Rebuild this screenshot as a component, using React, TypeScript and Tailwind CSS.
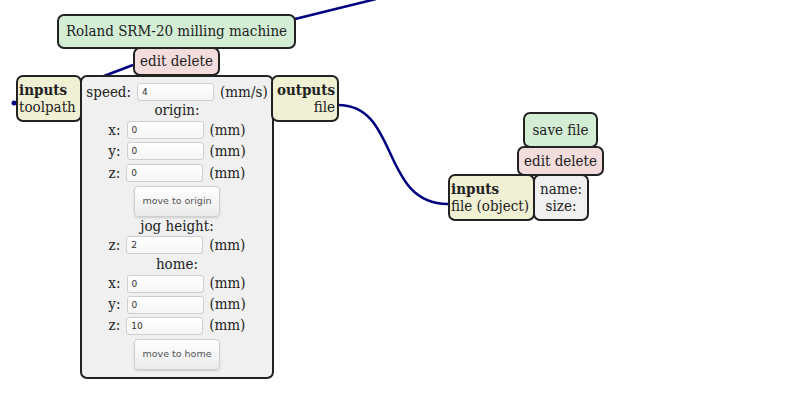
import React from "react";

const serif = { fontFamily: '"DejaVu Serif", serif', fontStretch: "condensed" } as React.CSSProperties;

function Field({ value }: { value: string }) {
  return (
    <div className="w-[77px] h-[18px] border border-[#cfcfcf] rounded-[3px] bg-gradient-to-b from-white to-[#f5f5f5] text-[9px] leading-[16px] pl-[4px] text-[#333] font-['DejaVu_Sans',sans-serif] [font-stretch:normal]">
      {value}
    </div>
  );
}

function Row({ label, value, unit, h }: { label: string; value: string; unit: string; h: string }) {
  return (
    <div className={`flex items-center ${h}`}>
      <span className="pr-[6px]">{label}</span>
      <Field value={value} />
      <span className="pl-[6px]">{unit}</span>
    </div>
  );
}

function Btn({ children, m }: { children: React.ReactNode; m: string }) {
  return (
    <div className={`w-[86px] h-[31px] ${m} flex items-center justify-center rounded-[4px] border border-[#d0d0d0] bg-gradient-to-b from-white to-[#ebebeb] shadow-[0_1px_2px_rgba(0,0,0,0.15)] text-[9.5px] text-[#555] font-['DejaVu_Sans',sans-serif] [font-stretch:normal]`}>
      {children}
    </div>
  );
}

export default function App() {
  return (
    <div className="relative w-[800px] h-[395px] bg-white overflow-hidden text-[15px] text-[#222]" style={serif}>
      <svg className="absolute inset-0" width="800" height="395">
        <path d="M295 19 L376 -1" stroke="#000080" strokeWidth="2.5" fill="none" />
        <path d="M133 65 L104 76" stroke="#000080" strokeWidth="2.5" fill="none" />
        <path d="M338 105 C 400 105, 380 204, 448 204" stroke="#000080" strokeWidth="2.5" fill="none" />
        <circle cx="14" cy="103" r="2.5" fill="#000080" />
      </svg>

      {/* title */}
      <div className="absolute left-[57px] top-[14px] w-[239px] h-[35px] rounded-[7px] border-2 border-[#222] bg-[#d4eed6] flex items-center justify-center">
        Roland SRM-20 milling machine
      </div>
      {/* edit delete */}
      <div className="absolute left-[133px] top-[47px] w-[87px] h-[29px] rounded-[7px] border-2 border-[#222] bg-[#f2dcdc] flex items-center justify-center">
        edit delete
      </div>
      {/* inputs */}
      <div className="absolute left-[16px] top-[75px] w-[66px] h-[47px] rounded-[7px] border-2 border-[#222] bg-[#f0f0d4] px-[1px] leading-[17px] pt-[5px]">
        <div className="font-bold">inputs</div>
        <div>toolpath</div>
      </div>
      {/* panel */}
      <div className="absolute left-[80px] top-[75px] w-[194px] h-[304px] rounded-[7px] border-2 border-[#222] bg-[#f0f0f0] flex flex-col items-center pt-[5px]">
        <div className="flex items-center h-[20px]">
          <span className="pr-[6px]">speed:</span>
          <Field value="4" />
          <span className="pl-[6px]">(mm/s)</span>
        </div>
        <div className="h-[17px] leading-[17px]">origin:</div>
        <Row label="x:" value="0" unit="(mm)" h="h-[21.5px]" />
        <Row label="y:" value="0" unit="(mm)" h="h-[21.5px]" />
        <Row label="z:" value="0" unit="(mm)" h="h-[21.5px]" />
        <Btn m="mt-[2px] mb-[1px]">move to origin</Btn>
        <div className="h-[16.5px] leading-[16.5px]">jog height:</div>
        <Row label="z:" value="2" unit="(mm)" h="h-[21.5px]" />
        <div className="h-[17.5px] leading-[17.5px]">home:</div>
        <Row label="x:" value="0" unit="(mm)" h="h-[21px]" />
        <Row label="y:" value="0" unit="(mm)" h="h-[21px]" />
        <Row label="z:" value="10" unit="(mm)" h="h-[21px]" />
        <Btn m="mt-[3px]">move to home</Btn>
      </div>
      {/* outputs */}
      <div className="absolute left-[271px] top-[75px] w-[68px] h-[47px] rounded-[7px] border-2 border-[#222] bg-[#f0f0d4] px-[2px] leading-[17px] pt-[5px] text-right">
        <div className="font-bold">outputs</div>
        <div>file</div>
      </div>

      {/* save file */}
      <div className="absolute left-[523px] top-[112px] w-[75px] h-[36px] rounded-[7px] border-2 border-[#222] bg-[#d4eed6] flex items-center justify-center">
        save file
      </div>
      <div className="absolute left-[517px] top-[146px] w-[87px] h-[30px] rounded-[7px] border-2 border-[#222] bg-[#f2dcdc] flex items-center justify-center">
        edit delete
      </div>
      <div className="absolute left-[448px] top-[174px] w-[87px] h-[47px] rounded-[7px] border-2 border-[#222] bg-[#f0f0d4] px-[1px] leading-[17px] pt-[5px]">
        <div className="font-bold">inputs</div>
        <div>file (object)</div>
      </div>
      <div className="absolute left-[533px] top-[174px] w-[56px] h-[47px] rounded-[7px] border-2 border-[#222] bg-[#f0f0f0] leading-[17px] pt-[5px] flex flex-col items-center">
        <div>name:</div>
        <div>size:</div>
      </div>
    </div>
  );
}
